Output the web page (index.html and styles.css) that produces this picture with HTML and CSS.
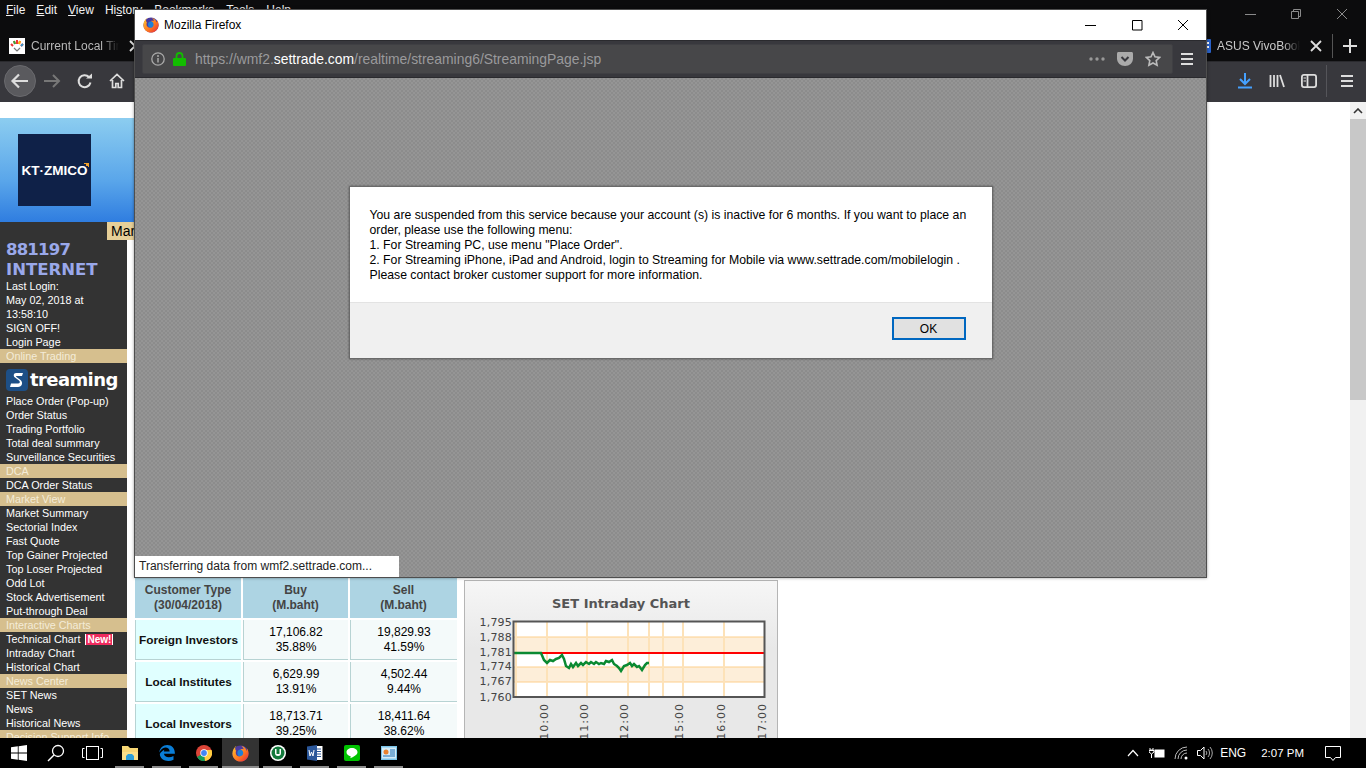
FILE: index.html
```html
<!DOCTYPE html>
<html lang="en">
<head>
<meta charset="utf-8">
<title>Mozilla Firefox</title>
<link rel="stylesheet" href="styles.css">
</head>
<body>
<svg class="defs" width="0" height="0" aria-hidden="true">
  <defs>
    <linearGradient id="ffg" x1="0" y1="0" x2="1" y2="1"><stop offset="0" stop-color="#ffcb30"/><stop offset=".55" stop-color="#ff7a1f"/><stop offset="1" stop-color="#e3243e"/></linearGradient>
    <symbol id="ff" viewBox="0 0 16 16">
      <circle cx="8" cy="8" r="7.6" fill="#4b3a9e"/>
      <circle cx="8.4" cy="7.6" r="3.4" fill="#1f7fd8"/>
      <path d="M4.2 .9C2 2.2.4 4.9.4 8c0 4.3 3.4 7.6 7.6 7.6s7.6-3.4 7.6-7.6c0-2-.6-3.7-1.7-5 .3 1.2.2 2-.2 2.6C13.200 3.300 11.300 1.300 8.700 .8c1.300 1 2 2.100 2.300 3.200-1-.5-2.400-.4-3.300.1.800.2 2.800 1 2.900 3.300.1 2.100-1.700 3.400-3.400 3.400-2 0-3.700-1.500-3.700-3.600 0-.6.200-1.200.5-1.700-.8-.5-1.300-2-.8-4.500z" fill="url(#ffg)"/>
    </symbol>
    <symbol id="x" viewBox="0 0 12 12"><path d="M1 1l10 10M11 1L1 11" stroke="currentColor" stroke-width="1.800" fill="none"/></symbol>
    <symbol id="burger" viewBox="0 0 14 14"><path d="M1 2h12M1 7h12M1 12h12" stroke="currentColor" stroke-width="2" fill="none"/></symbol>
  </defs>
</svg>

<div class="browser">
  <div class="chrome-top">
    <div class="top-row">
      <nav class="menu">
        <span class="m-file"><u>F</u>ile</span>
        <span class="m-edit"><u>E</u>dit</span>
        <span class="m-view"><u>V</u>iew</span>
        <span class="m-hist">Hi<u>s</u>tory</span>
        <span class="m-book"><u>B</u>ookmarks</span>
        <span class="m-tools"><u>T</u>ools</span>
        <span class="m-help"><u>H</u>elp</span>
      </nav>
      <div class="winctl dim">
        <svg width="46" height="12" viewBox="0 0 46 12"><path d="M18 6.500h11" stroke="#8a8a8a" fill="none"/></svg>
        <svg width="46" height="12" viewBox="0 0 46 12"><path d="M18.500 3.500h7v7h-7zM20.500 3.500v-2h7v7h-2" stroke="#8a8a8a" fill="none"/></svg>
        <svg width="46" height="12" viewBox="0 0 46 12"><path d="M18 1l10 10M28 1L18 11" stroke="#8a8a8a" fill="none"/></svg>
      </div>
    </div>
    <div class="tab-row">
      <div class="tab first">
        <svg class="favicon" width="16" height="16" viewBox="0 0 16 16"><rect width="16" height="16" fill="#fff"/><path d="M2 6l2 2M5 3l1 3M8 2v4M11 3l-1 3M14 6l-2 2" stroke-width="2" stroke="#e33"/><path d="M5 3l1 3" stroke="#3a3" stroke-width="2"/><path d="M11 3l-1 3" stroke="#fb0" stroke-width="2"/><path d="M14 6l-2 2" stroke="#39c" stroke-width="2"/><path d="M5 10l3 3 3-3" stroke="#777" stroke-width="1.200" fill="none"/></svg>
        <span class="tab-title current">Current Local Time</span>
        <svg class="tab-x first-x" width="12" height="12"><use href="#x"/></svg>
      </div>
      <div class="tabs-right">
        <svg class="asus-fav" width="5" height="14" viewBox="0 0 5 14"><rect width="5" height="14" rx="1" fill="#2a62c9"/><rect y="3" width="3" height="2" fill="#fff"/><rect y="7" width="3" height="2" fill="#fff"/></svg>
        <span class="tab-title asus">ASUS VivoBook S15</span>
        <svg class="tab-x" width="12" height="12"><use href="#x"/></svg>
        <span class="tab-sep"></span>
        <svg class="plus" width="16" height="16" viewBox="0 0 16 16"><path d="M8 1v14M1 8h14" stroke="#ddd" stroke-width="2"/></svg>
      </div>
    </div>
    <div class="toolbar">
      <div class="back">
        <svg width="20" height="18" viewBox="0 0 20 18"><path d="M18 9H3M9 2.500L2.500 9 9 15.500" stroke="#ddd" stroke-width="2.200" fill="none"/></svg>
      </div>
      <svg class="t-fwd" width="18" height="16" viewBox="0 0 18 16"><path d="M1 8h14M10 2l6 6-6 6" stroke="#777" stroke-width="2" fill="none"/></svg>
      <svg class="t-reload" width="16" height="16" viewBox="0 0 16 16"><path d="M13.500 9.500A6 6 0 1 1 12 4" stroke="#ddd" stroke-width="2" fill="none"/><path d="M9 5.500h6v-5z" fill="#ddd"/></svg>
      <svg class="t-home" width="16" height="16" viewBox="0 0 16 16"><path d="M1 8l7-6.500L15 8M3.500 7v7.500h3.300v-4h2.400v4h3.300V7" stroke="#ddd" stroke-width="1.700" fill="none"/></svg>
      <div class="tool-right">
        <svg width="16" height="16" viewBox="0 0 16 16"><path d="M8 0v10M3 6l5 5 5-5" stroke="#45a1ff" stroke-width="2" fill="none"/><path d="M1 14.500h14" stroke="#45a1ff" stroke-width="2"/></svg>
        <svg width="16" height="16" viewBox="0 0 16 16"><path d="M1.500 2v12M5 2v12M8.500 2v12M11 2l4 12" stroke="#ddd" stroke-width="1.800" fill="none"/></svg>
        <svg width="16" height="16" viewBox="0 0 16 16"><rect x=".9" y="1.900" width="14.200" height="12.200" rx="2" stroke="#ddd" stroke-width="1.800" fill="none"/><path d="M6.500 2v12" stroke="#ddd" stroke-width="1.800"/><path d="M2.500 5h2.500M2.500 8h2.500" stroke="#ddd"/></svg>
        <span class="tool-sep"></span>
        <svg class="ham" width="14" height="14"><use href="#burger"/></svg>
      </div>
    </div>
  </div>

  <div class="viewport">
    <div class="page">
      <div class="page-top"></div>
      <div class="banner">
        <div class="logo"><span>KT·ZMICO</span><i class="logo-tick"></i></div>
      </div>
      <div class="page-row">
        <span class="mar-tab">Market</span>
        <aside class="sidebar">
          <div class="acct digits">881197</div>
          <div class="acct">INTERNET</div>
          <div class="item">Last Login:</div>
          <div class="item">May 02, 2018 at</div>
          <div class="item">13:58:10</div>
          <div class="item">SIGN OFF!</div>
          <div class="item">Login Page</div>
          <div class="head">Online Trading</div>
          <div class="stream">
            <svg width="22" height="22" viewBox="0 0 22 22"><rect width="22" height="22" rx="4" fill="#1d4f86"/><path d="M17 4H10C7.500 4 7 7 9 8.500l4 3c1.500 1 1 3-1 3H5L4 18h8c4 0 5.500-4.500 2.500-7L10.500 8c-.7-.5-.4-1 .2-1H16z" fill="#fff"/></svg>
            <span>treaming</span>
          </div>
          <div class="item">Place Order (Pop-up)</div>
          <div class="item">Order Status</div>
          <div class="item">Trading Portfolio</div>
          <div class="item">Total deal summary</div>
          <div class="item">Surveillance Securities</div>
          <div class="head">DCA</div>
          <div class="item">DCA Order Status</div>
          <div class="head">Market View</div>
          <div class="item">Market Summary</div>
          <div class="item">Sectorial Index</div>
          <div class="item">Fast Quote</div>
          <div class="item">Top Gainer Projected</div>
          <div class="item">Top Loser Projected</div>
          <div class="item">Odd Lot</div>
          <div class="item">Stock Advertisement</div>
          <div class="item">Put-through Deal</div>
          <div class="head">Interactive Charts</div>
          <div class="item">Technical Chart <b class="new">New!</b></div>
          <div class="item">Intraday Chart</div>
          <div class="item">Historical Chart</div>
          <div class="head">News Center</div>
          <div class="item">SET News</div>
          <div class="item">News</div>
          <div class="item">Historical News</div>
          <div class="head">Decision Support Info</div>
        </aside>
        <main class="content">
          <div class="flows">
            <div class="th">Customer Type<br>(30/04/2018)</div>
            <div class="th">Buy<br>(M.baht)</div>
            <div class="th">Sell<br>(M.baht)</div>
            <div class="rowh">Foreign Investors</div>
            <div class="td">17,106.82<br>35.88%</div>
            <div class="td">19,829.93<br>41.59%</div>
            <div class="rowh">Local Institutes</div>
            <div class="td">6,629.99<br>13.91%</div>
            <div class="td">4,502.44<br>9.44%</div>
            <div class="rowh">Local Investors</div>
            <div class="td">18,713.71<br>39.25%</div>
            <div class="td">18,411.64<br>38.62%</div>
          </div>
          <section class="chart-box">
            <h3 class="chart-title">SET Intraday Chart</h3>
            <svg class="chart" width="314" height="134" viewBox="464 604 314 134">
              <rect x="513" y="621" width="252" height="76" fill="#fff"/>
              <rect x="514" y="637" width="250" height="15" fill="#fdeed9"/>
              <rect x="514" y="667" width="250" height="15" fill="#fdeed9"/>
              <path d="M514 637h250M514 667h250M514 682h250" stroke="#fdcf8c"/>
              <path d="M516 622v74M547 622v74M587 622v74M628 622v74M649 622v74M663 622v74M683 622v74M724 622v74" stroke="#fde2b8" stroke-width="2"/>
              <path d="M514 653h250" stroke="#f00" stroke-width="2"/>
              <path class="trace" d="M514 653L541 653L544 660L547 663L550 660L553 661L556 659L559 658L562 655L564 659L566 666L569 668L571 664L573 667L576 663L578 666L581 663L583 665L586 662L589 664L591 662L594 664L596 662L599 664L601 663L604 664L606 661L609 662L612 660L614 664L617 666L619 668L621 671L624 666L627 665L630 663L632 666L634 664L637 667L639 666L642 670L645 665L647 663L649 663"/>
              <rect x="513.500" y="621.500" width="251" height="75.500" fill="none" stroke="#555" stroke-width="2"/>
              <g class="ax ax-y">
                <text x="512" y="626">1,795</text><text x="512" y="641">1,788</text><text x="512" y="656">1,781</text><text x="512" y="670">1,774</text><text x="512" y="685">1,767</text><text x="512" y="701">1,760</text>
              </g>
              <g class="ax ax-x">
                <text transform="translate(548 703) rotate(-90)">10:00</text>
                <text transform="translate(588 703) rotate(-90)">11:00</text>
                <text transform="translate(628 703) rotate(-90)">12:00</text>
                <text transform="translate(683 703) rotate(-90)">15:00</text>
                <text transform="translate(725 703) rotate(-90)">16:00</text>
                <text transform="translate(766 703) rotate(-90)">17:00</text>
              </g>
            </svg>
          </section>
        </main>
      </div>
    </div>
    <div class="scrollbar">
      <div class="sb-btn"><svg width="10" height="6" viewBox="0 0 10 6"><path d="M1 5l4-4 4 4" stroke="#333" stroke-width="1.600" fill="none"/></svg></div>
      <div class="sb-thumb"></div>
    </div>
  </div>
</div>

<footer class="taskbar">
  <div class="tb-slot"><svg width="16" height="16" viewBox="0 0 16 16"><path d="M0 2.300l6.800-1v6.300H0zM7.600 1.200L16 0v7.600H7.600zM0 8.400h6.800v6.300L0 13.700zM7.600 8.400H16V16l-8.400-1.200z" fill="#fff"/></svg></div>
  <div class="tb-slot"><svg width="18" height="18" viewBox="0 0 18 18"><circle cx="11" cy="7" r="5.500" stroke="#fff" stroke-width="1.300" fill="none"/><path d="M7 11l-6 6" stroke="#fff" stroke-width="1.500"/></svg></div>
  <div class="tb-slot"><svg width="21" height="14" viewBox="0 0 21 14"><rect x="4.500" y=".5" width="12" height="13" stroke="#fff" fill="none"/><path d="M2.500 2.500H.5v9h2M18.500 2.500h2v9h-2" stroke="#fff" fill="none"/></svg></div>
  <div class="tb-slot run"><svg width="18" height="16" viewBox="0 0 18 16"><path d="M1 1h6l2 2h8v4H1z" fill="#f8d775"/><path d="M1 7h16v8H1z" fill="#fbe08a"/><path d="M5 15v-4l2-2h4l2 2v4z" fill="#2d9fd9"/></svg></div>
  <div class="tb-slot run"><svg width="16" height="16" viewBox="0 0 16 16"><path d="M.2 7.500C.8 3 4 0 8.200 0c4.700 0 7.800 3.500 7.700 8.800H5c.2 3.600 5.300 4.600 9.500 2.200v3.700C9.200 17.300 1.200 15.700.8 9c1.200-2 2.800-3.200 4.500-4.200-.2.700-.4 1.200-.4 1.700h5.700C10.700 3 7 1.500 4 3.200 2.500 4 1.200 5.500.2 7.500z" fill="#0a7dd6"/></svg></div>
  <div class="tb-slot run"><svg width="16" height="16" viewBox="0 0 16 16"><circle cx="8" cy="8" r="8" fill="#db4437"/><path d="M8 8L1 12a8 8 0 0 0 8 4z" fill="#0f9d58"/><path d="M8 5h7.500A8 8 0 0 1 9 16z" fill="#ffcd40"/><circle cx="8" cy="8" r="3.700" fill="#fff"/><circle cx="8" cy="8" r="2.900" fill="#4285f4"/></svg></div>
  <div class="tb-slot active"><svg width="17" height="17"><use href="#ff"/></svg></div>
  <div class="tb-slot run"><svg width="16" height="16" viewBox="0 0 16 16"><circle cx="8" cy="8" r="8" fill="#fff"/><circle cx="8" cy="8" r="6.500" fill="#137a3c"/><path d="M5 4v4a3 3 0 0 0 6 0V4H9.500v5h-3V4z" fill="#fff"/></svg></div>
  <div class="tb-slot run"><svg width="16" height="16" viewBox="0 0 16 16"><path d="M7 1h8.500v14H7z" fill="#fff"/><path d="M9 4h5M9 6.500h5M9 9h5M9 11.500h5" stroke="#2b579a"/><path d="M0 1.500L10 0v16L0 14.500z" fill="#2b579a"/><path d="M2 5l1 6 1.500-4L6 11l1-6" stroke="#fff" fill="none"/></svg></div>
  <div class="tb-slot run"><svg width="16" height="16" viewBox="0 0 16 16"><rect width="16" height="16" rx="2" fill="#00c300"/><path d="M8 3c-3 0-5.500 1.800-5.500 4.200 0 2 1.800 3.500 4.200 4l-.3 2C9 12 13.500 10 13.500 7.200 13.500 4.800 11 3 8 3z" fill="#fff"/></svg></div>
  <div class="tb-slot run"><svg width="16" height="16" viewBox="0 0 16 16"><rect y="1" width="16" height="14" fill="#7cc4e8"/><rect x="1" y="2.500" width="14" height="11" fill="#d5ecf7"/><circle cx="5" cy="7" r="2.500" fill="#e8812d"/><path d="M9 5h5M9 7h5M9 9h5" stroke="#1f6fb2"/><path d="M2 11h12" stroke="#1f6fb2"/></svg></div>

  <div class="tray">
    <svg class="tr-caret" width="12" height="8" viewBox="0 0 12 8"><path d="M1 7l5-5.500L11 7" stroke="#fff" fill="none" stroke-width="1.200"/></svg>
    <svg class="tr-batt" width="16" height="12" viewBox="0 0 16 12"><path d="M1 1v2h3V1M0 3.500h5v1.500L2.500 7 0 5zM2.500 7v4" stroke="#fff" fill="none" stroke-width="1"/><rect x="5.500" y="2.500" width="10" height="8" fill="#fff"/></svg>
    <svg class="tr-wifi" width="14" height="14" viewBox="0 0 14 14"><path d="M1 13A12 12 0 0 1 13 1M4 13A9 9 0 0 1 13 4M7 13A6 6 0 0 1 13 7" stroke="#bbb" fill="none"/><circle cx="12" cy="12" r="1.500" fill="#fff"/></svg>
    <svg class="tr-vol" width="16" height="14" viewBox="0 0 16 14"><path d="M.5 4.500h3L7 1v12l-3.500-3.500h-3z" stroke="#fff" fill="none"/><path d="M9 5a3 3 0 0 1 0 4M11 3a6 6 0 0 1 0 8M13 1a9 9 0 0 1 0 12" stroke="#aaa" fill="none"/></svg>
    <span class="tr-lang">ENG</span>
    <span class="tr-time">2:07 PM</span>
    <svg class="tr-note" width="16" height="15" viewBox="0 0 16 15"><path d="M.5.500h15v11h-5L8 14.500 5.500 11.500h-5z" stroke="#fff" fill="none"/></svg>
  </div>
</footer>

<div class="popup">
  <div class="pop-title">
    <svg width="16" height="16"><use href="#ff"/></svg>
    <span class="pop-name">Mozilla Firefox</span>
    <div class="pop-ctl">
      <svg width="46" height="12" viewBox="0 0 46 12"><path d="M17 6.500h11" stroke="#000" fill="none"/></svg>
      <svg width="46" height="12" viewBox="0 0 46 12"><path d="M18.500 1.500h9.500v9.500h-9.500z" stroke="#000" fill="none"/></svg>
      <svg width="46" height="12" viewBox="0 0 46 12"><path d="M18 1l10 10M28 1L18 11" stroke="#000" fill="none"/></svg>
    </div>
  </div>
  <div class="pop-bar">
    <div class="urlbar">
      <svg width="14" height="14" viewBox="0 0 14 14"><circle cx="7" cy="7" r="6.200" stroke="#aaa" stroke-width="1.300" fill="none"/><path d="M7 6v4.500" stroke="#aaa" stroke-width="1.500"/><circle cx="7" cy="3.900" r="1" fill="#aaa"/></svg>
      <svg class="lock" width="13" height="14" viewBox="0 0 13 14"><path d="M3.500 6V4a3 3 0 0 1 6 0v2" stroke="#12bc00" stroke-width="1.800" fill="none"/><rect y="6" width="13" height="8" rx="1" fill="#12bc00"/></svg>
      <span class="url">https://wmf2.<b>settrade.com</b>/realtime/streaming6/StreamingPage.jsp</span>
      <svg class="dots" width="16" height="4" viewBox="0 0 16 4"><circle cx="2" cy="2" r="1.700" fill="#999"/><circle cx="8" cy="2" r="1.700" fill="#999"/><circle cx="14" cy="2" r="1.700" fill="#999"/></svg>
      <svg class="pocket" width="16" height="14" viewBox="0 0 16 14"><path d="M1.500 0h13C15.400 0 16 .6 16 1.500V6.500C16 11 12.400 14 8 14S0 11 0 6.500V1.500C0 .6.600 0 1.500 0z" fill="#aaa"/><path d="M4.500 5L8 8.500 11.500 5" stroke="#38383d" stroke-width="2" fill="none"/></svg>
      <svg class="star" width="16" height="16" viewBox="0 0 16 16"><path d="M8 1.500l2 4.300 4.700.6-3.500 3.200.9 4.700L8 12l-4.100 2.300.9-4.700L1.300 6.400 6 5.800z" stroke="#bbb" stroke-width="1.600" fill="none"/></svg>
    </div>
    <svg class="pop-ham" width="14" height="14"><use href="#burger"/></svg>
  </div>
  <div class="pop-body">
    <div class="dialog" role="alertdialog">
      <div class="dlg-text">You are suspended from this service because your account (s) is inactive for 6 months. If you want to place an order, please use the following menu:<br>1. For Streaming PC, use menu "Place Order".<br>2. For Streaming iPhone, iPad and Android, login to Streaming for Mobile via www.settrade.com/mobilelogin .<br>Please contact broker customer support for more information.</div>
      <div class="dlg-foot"><button class="ok" type="button">OK</button></div>
    </div>
    <div class="status">Transferring data from wmf2.settrade.com...</div>
  </div>
</div>
</body>
</html>
```
FILE: styles.css
```css
* { box-sizing: border-box; }
html, body { margin: 0; padding: 0; }
body {
  width: 1366px;
  height: 768px;
  overflow: hidden;
  background: #000;
  position: relative;
  font-family: "Liberation Sans", Arial, sans-serif;
}
.defs { position: absolute; }
svg { display: block; flex: none; }

/* main browser */
.browser { height: 738px; display: flex; flex-direction: column; }
.chrome-top { background: #0c0c0d; flex: none; }
.top-row { height: 30px; display: flex; justify-content: space-between; color: #eee; }
.menu { display: flex; font-size: 12px; padding: 3px 0 0 6px; height: 18px; color: #f2f2f2; }
.menu span { display: block; }
.m-edit { margin-left: 11px; }
.m-view { margin-left: 11px; }
.m-hist { margin-left: 11px; }
.m-book { margin-left: 12px; }
.m-tools { margin-left: 12px; }
.m-help { margin-left: 12px; }
.winctl { display: flex; padding-top: 8px; margin-right: 1px; }
.tab-row { height: 31px; display: flex; justify-content: space-between; align-items: center; color: #ddd; }
.tab { display: flex; align-items: center; padding-left: 9px; }
.favicon { margin-right: 6px; }
.tab-title { font-size: 12px; color: #b8b8b8; white-space: nowrap; overflow: hidden; }
.tab-title.current {
  width: 88px;
  -webkit-mask-image: linear-gradient(90deg, #000 80%, transparent 100%);
  mask-image: linear-gradient(90deg, #000 80%, transparent 100%);
}
.first-x { margin-left: 5px; color: #ccc; }
.tabs-right { display: flex; align-items: center; padding-right: 8px; }
.tab-title.asus {
  width: 83px; margin-left: 6px; color: #c8c8c8;
  -webkit-mask-image: linear-gradient(90deg, #000 80%, transparent 100%);
  mask-image: linear-gradient(90deg, #000 80%, transparent 100%);
}
.tab-x { margin-left: 10px; color: #ddd; }
.tab-sep { width: 1px; height: 24px; background: #555; margin-left: 10px; }
.plus { margin-left: 9px; }

.toolbar { height: 41px; background: #38383d; display: flex; align-items: center; border-top: 1px solid #2a2a2e; padding-bottom: 2px; position: relative; }
.back { width: 32px; height: 32px; border-radius: 50%; background: #5a5a5e; border: 1px solid #6a6a6e; margin-left: 4px; display: flex; align-items: center; justify-content: center; }
.t-fwd { margin-left: 7px; }
.t-reload { margin-left: 16px; }
.t-home { margin-left: 16px; }
.tool-right { margin-left: auto; display: flex; align-items: center; padding-right: 12px; color: #ddd; gap: 16px; }
.tool-sep { width: 1px; height: 32px; background: #55555a; margin-left: -7px; margin-right: -3px; }

/* page */
.viewport { flex: 1; display: flex; min-height: 0; background: #fff; }
.page { flex: 1; min-width: 0; overflow: hidden; }
.page-top { height: 16px; background: #fff; }
.banner {
  width: 900px;
  height: 104px;
  background: linear-gradient(180deg, #8ccdf0 0%, #5aa6ea 60%, #2f7de0 100%);
  padding: 16px 0 0 18px;
}
.logo { width: 73px; height: 72px; background: #0f2148; display: flex; align-items: center; justify-content: center; position: relative; }
.logo span { color: #fff; font-weight: 700; font-size: 13.500px; }
.logo-tick { position: absolute; right: 2px; top: 29px; width: 5px; height: 5px; background: linear-gradient(45deg, transparent 50%, #f2a12c 50%); }
.page-row { display: flex; position: relative; align-items: flex-start; }
.mar-tab {
  position: absolute; left: 107px; top: 0; width: 40px; height: 18px; overflow: hidden;
  background: #e6cf98; color: #000; font-size: 14px; padding: 1px 0 0 4px; white-space: nowrap;
}

.sidebar { width: 127px; height: 520px; background: #333; flex: none; padding-top: 18px; overflow: hidden; color: #fff; }
.acct { height: 20px; font: 700 16.500px/20px "DejaVu Sans", Verdana, sans-serif; color: #9aa8ea; padding-left: 6px; white-space: nowrap; }
.digits { letter-spacing: -.8px; }
.item { height: 14px; line-height: 14px; font-size: 10.800px; padding-left: 6px; white-space: nowrap; color: #fff; }
.acct + .item { margin-top: -1px; }
.head { height: 14px; line-height: 14px; font-size: 10.800px; padding-left: 6px; background: #d6bf8e; color: #f4ecd8; white-space: nowrap; }
.stream { height: 31px; display: flex; align-items: center; padding: 2px 0 0 6px; gap: 2px; }
.stream span { font: 700 18px/22px "DejaVu Sans", sans-serif; color: #fff; letter-spacing: -.6px; }
.new { background: #ee2b5e; color: #fff; font-size: 10px; padding: 0 1px; margin-left: 2px; border: 1px solid #fff; border-width: 0 1px; line-height: 11px; display: inline-block; }

.content { padding: 0 0 0 8px; display: flex; gap: 7px; align-items: flex-start; flex: 1; min-width: 0; }
.flows {
  margin-top: 354px;
  display: grid;
  grid-template-columns: 106px 105px 107px;
  grid-template-rows: 42px 40px 40px 40px;
  gap: 2px;
  font-size: 12px;
  line-height: 15px;
  text-align: center;
  flex: none;
}
.th { background: #add4e3; color: #444; font-weight: 700; display: flex; align-items: center; justify-content: center; padding-top: 1px; }
.rowh { background: #e0ffff; color: #111; font-weight: 700; font-size: 11.800px; display: flex; align-items: center; justify-content: center; padding-top: 2px; border-left: 1px solid #b7d3d3; border-bottom: 1px solid #b7d3d3; white-space: nowrap; }
.td { background: #f4fafa; color: #000; display: flex; align-items: center; justify-content: center; border-left: 1px solid #b7d3d3; border-bottom: 1px solid #b7d3d3; }
.chart-box {
  margin-top: 358px;
  width: 314px; height: 170px;
  border: 1px solid #b5b5b5; border-bottom: 0;
  background: linear-gradient(180deg, #f6f6f6 0%, #e8e8e8 40%, #e8e8e8 100%);
  padding-top: 16px;
  flex: none;
}
.chart-title { margin: 0; height: 7px; font: 700 13px/14px "DejaVu Sans", sans-serif; color: #555; text-align: center; }
.chart { margin-left: -1px; }
.trace { fill: none; stroke: #0a8a32; stroke-width: 2.500; }
.ax text { font: 11px "DejaVu Sans", sans-serif; fill: #444; letter-spacing: .2px; }
.ax-y text { text-anchor: end; }
.ax-x text { text-anchor: end; letter-spacing: 1px; }

.scrollbar { width: 16px; background: #f1f1f1; flex: none; }
.sb-btn { height: 17px; display: flex; align-items: center; justify-content: center; }
.sb-thumb { height: 281px; background: #c8c8c8; }

/* taskbar */
.taskbar { height: 30px; background: #000; display: flex; position: relative; }
.tb-slot { width: 37px; height: 30px; display: flex; align-items: center; justify-content: center; position: relative; }
.run::after { content: ""; position: absolute; left: 4px; right: 4px; bottom: 0; height: 2px; background: #8c8c8c; }
.active { background: #333; }
.active::after { content: ""; position: absolute; left: 0; right: 0; bottom: 0; height: 2px; background: #8c8c8c; }
.tray { margin-left: auto; display: flex; align-items: center; color: #fff; font-size: 12px; padding-right: 25px; }
.tr-batt { margin-left: 10px; }
.tr-wifi { margin-left: 9px; }
.tr-vol { margin-left: 9px; }
.tr-lang { margin-left: 7px; }
.tr-time { margin-left: 15px; font-size: 11.500px; }
.tr-note { margin-left: 21px; }

/* popup window: a window on a desktop */
.popup {
  position: absolute; left: 134px; top: 9px; width: 1073px; height: 569px;
  z-index: 2;
  border: 1px solid #4e4e4e;
  display: flex; flex-direction: column;
  box-shadow: 0 0 3px rgba(0,0,0,.4);
  background: #38383d;
}
.pop-title { height: 30px; background: #fff; display: flex; align-items: center; padding-left: 8px; flex: none; }
.pop-name { font-size: 12px; color: #000; margin-left: 5px; }
.pop-ctl { margin-left: auto; display: flex; }
.pop-bar { height: 37px; background: #38383d; border-top: 1px solid #2a2a2e; display: flex; align-items: center; padding-left: 7px; flex: none; }
.urlbar { width: 1031px; height: 30px; background: #474749; border-radius: 2px; display: flex; align-items: center; padding-left: 8px; border: 1px solid #3f3f43; }
.lock { margin-left: 8px; }
.url { font-size: 13.900px; color: #9a9a9c; margin-left: 9px; white-space: nowrap; }
.url b { font-weight: 400; color: #fff; }
.dots { margin-left: auto; }
.pocket { margin-left: 12px; }
.star { margin-left: 12px; margin-right: 11px; }
.pop-ham { margin-left: 7px; color: #ddd; }
.pop-body {
  flex: 1; position: relative; display: flex; justify-content: center; align-items: flex-start; border-top: 1px solid #2a2a2e;
  background: repeating-conic-gradient(#8c8c8c 0 25%, #959595 0 50%) 0 0 / 4px 4px;
}
.dialog { margin-top: 108px; width: 644px; height: 173px; background: #fff; border: 1px solid #6a6a6a; display: flex; flex-direction: column; box-shadow: 0 0 2px rgba(0,0,0,.4); }
.dlg-text { height: 115px; padding: 21px 20px 0; font-size: 12.250px; line-height: 15px; color: #000; }
.dlg-foot { flex: 1; background: #f0f0f0; border-top: 1px solid #e3e3e3; display: flex; justify-content: flex-end; align-items: flex-start; padding: 14px 26px 0 0; }
.ok { width: 74px; height: 23px; padding: 0; border: 2px solid #0067c0; background: #e1e1e1; font: 12px "Liberation Sans", Arial, sans-serif; color: #000; }
.status { position: absolute; left: 0; bottom: 0; width: 264px; height: 21px; background: #fff; color: #222; font-size: 12px; line-height: 21px; padding-left: 4px; white-space: nowrap; }
```
